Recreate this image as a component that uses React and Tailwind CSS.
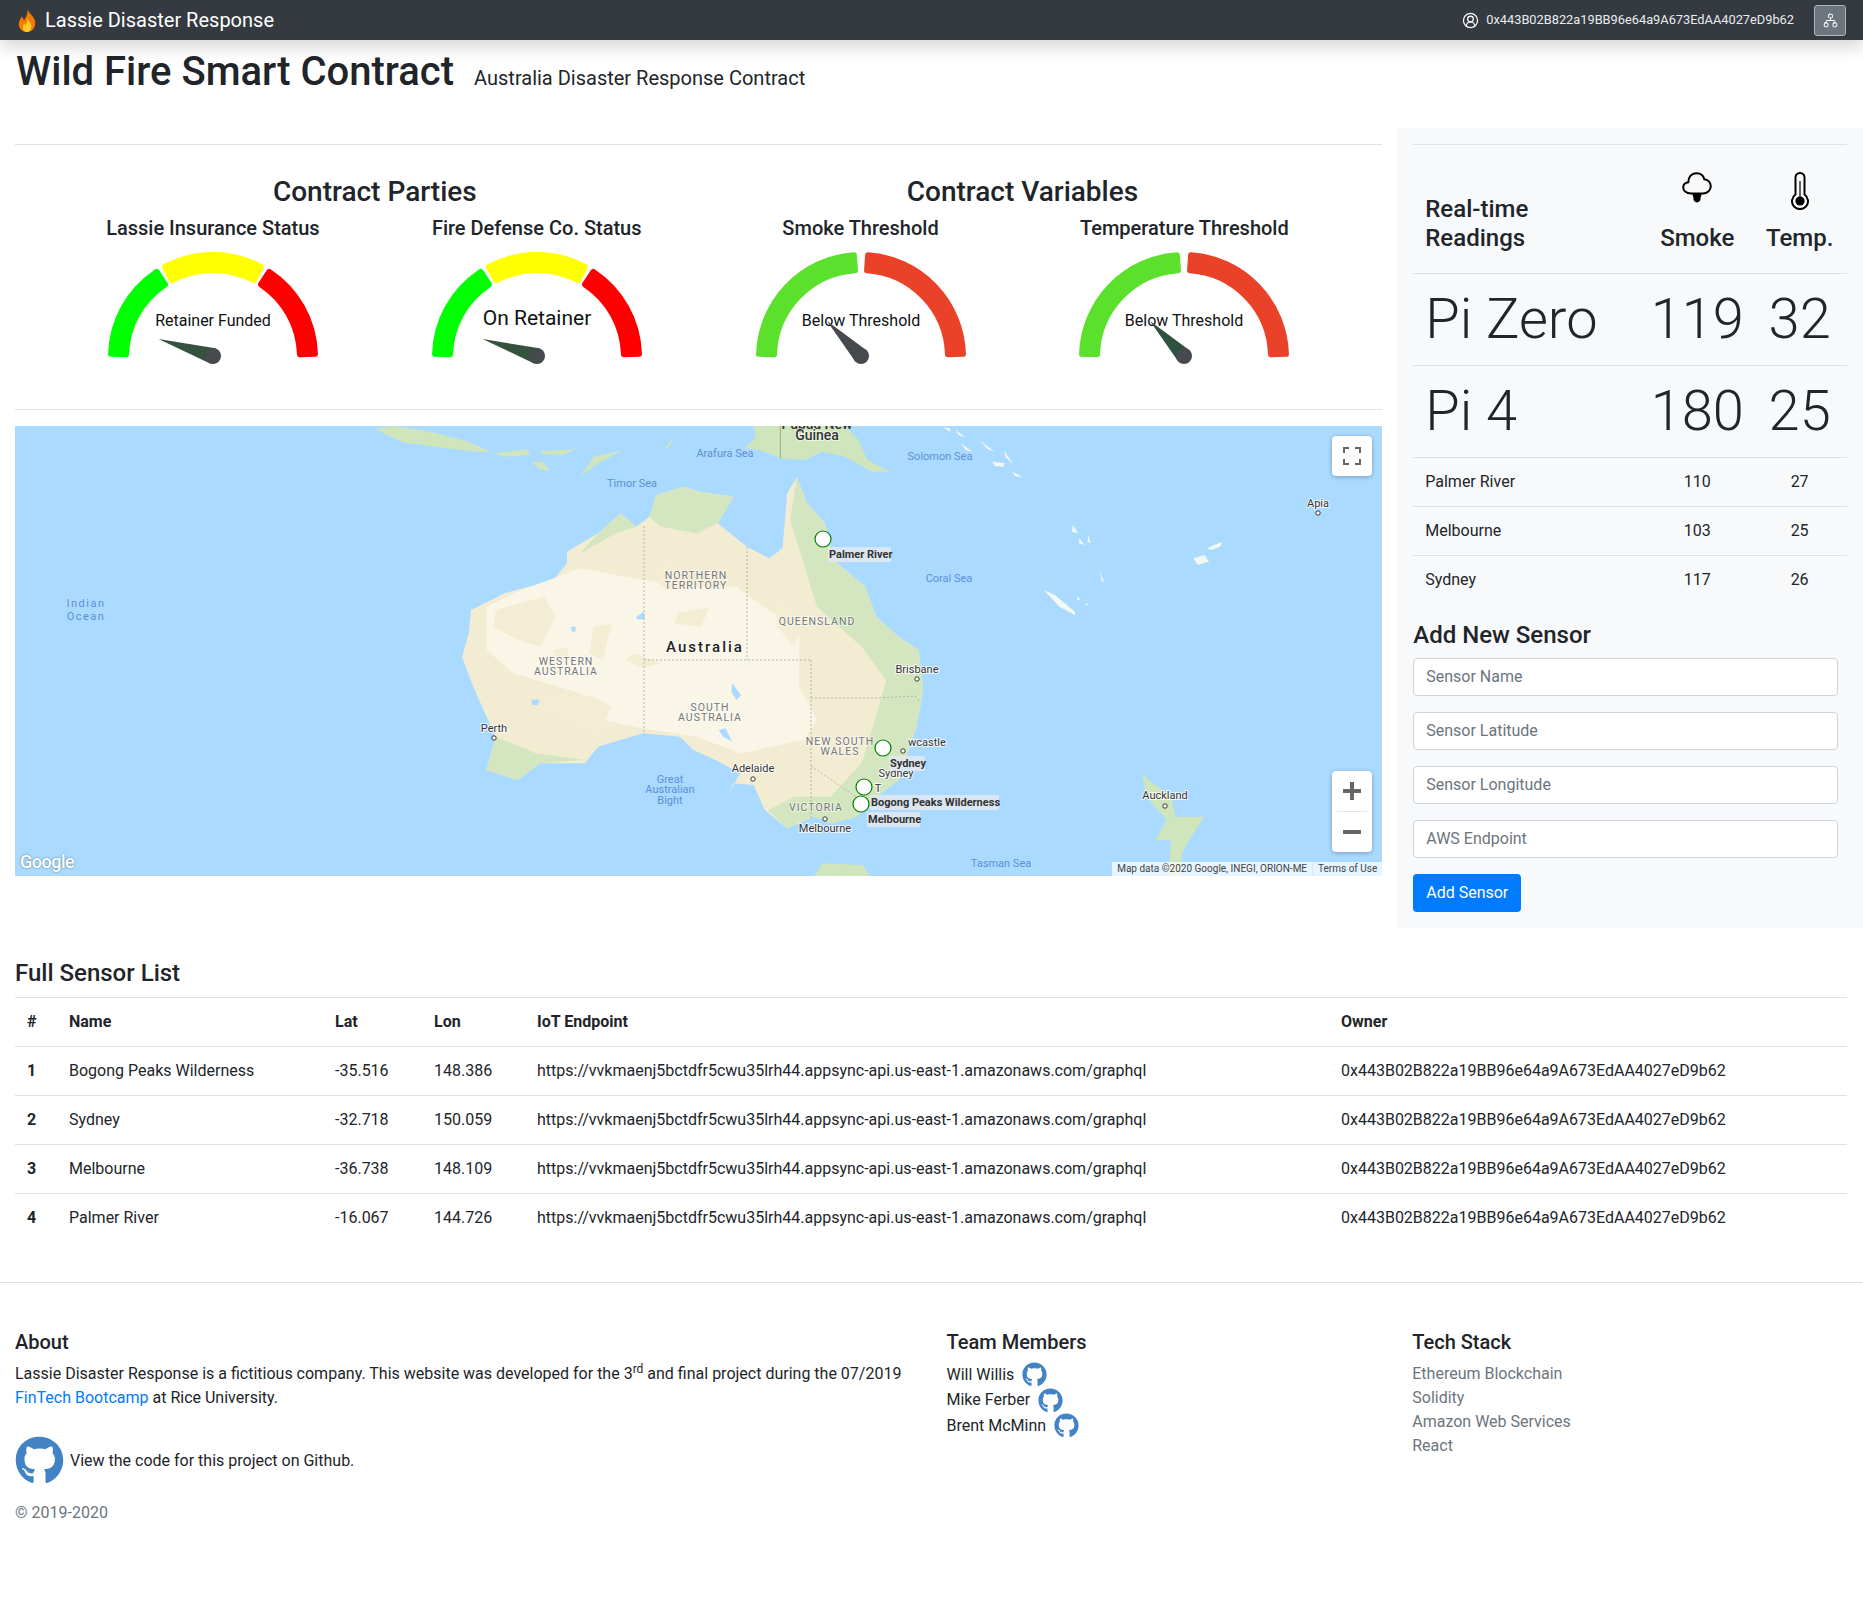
import React from "react";
import { FaGithub } from "react-icons/fa";
import { Network, UserCircle2 } from "lucide-react";

const address = "0x443B02B822a19BB96e64a9A673EdAA4027eD9b62";
const endpoint = "https://vvkmaenj5bctdfr5cwu35lrh44.appsync-api.us-east-1.amazonaws.com/graphql";

const sensors = [
  [1, "Bogong Peaks Wilderness", "-35.516", "148.386"],
  [2, "Sydney", "-32.718", "150.059"],
  [3, "Melbourne", "-36.738", "148.109"],
  [4, "Palmer River", "-16.067", "144.726"],
];

const readings = [
  ["Palmer River", 110, 27],
  ["Melbourne", 103, 25],
  ["Sydney", 117, 26],
];

// gauge drawing
const CX = 120;
const CY = 105;

function polar(r, deg) {
  const a = (Math.PI * (180 - deg)) / 180;
  return [CX + r * Math.cos(a), CY - r * Math.sin(a)];
}

function sector(a1, a2) {
  const ro = 102;
  const ri = 87;
  const [x1, y1] = polar(ro, a1);
  const [x2, y2] = polar(ro, a2);
  const [x3, y3] = polar(ri, a2);
  const [x4, y4] = polar(ri, a1);
  return `M${x1} ${y1}A${ro} ${ro} 0 0 1 ${x2} ${y2}L${x3} ${y3}A${ri} ${ri} 0 0 0 ${x4} ${y4}Z`;
}

function Gauge({ title, segments, label, labelSize = 16, labelY = -35, tip, needle }) {
  const hub = [CX, CY - 1];
  const t = [CX + tip[0], CY + tip[1]];
  const len = Math.hypot(t[0] - hub[0], t[1] - hub[1]);
  const nx = (-(t[1] - hub[1]) / len) * 8;
  const ny = ((t[0] - hub[0]) / len) * 8;
  return (
    <div className="flex flex-col items-center">
      <h5 className="text-[20px] leading-[24px] font-medium mb-3">{title}</h5>
      <svg width="240" height="118" viewBox="0 0 240 118" className="block">
        {segments.map(([a1, a2, color]) => (
          <path key={a1} d={sector(a1, a2)} fill={color} stroke={color} strokeWidth="6" strokeLinejoin="round" />
        ))}
        <text x={CX} y={CY + labelY} textAnchor="middle" dominantBaseline="middle" fontSize={labelSize} fill="#111">
          {label}
        </text>
        <polygon points={`${t[0]},${t[1]} ${hub[0] + nx},${hub[1] + ny} ${hub[0] - nx},${hub[1] - ny}`} fill={needle} />
        <circle cx={hub[0]} cy={hub[1]} r="8" fill="#464a4f" />
      </svg>
    </div>
  );
}

const threeZones = [
  [1.8, 56.5, "#00ff00"],
  [62, 118, "#ffff00"],
  [123.5, 178.2, "#ff0000"],
];
const twoZones = [
  [1.8, 86, "#5be12c"],
  [94, 178.2, "#ea4228"],
];

// map shapes, in the scaled coordinates of the reference crop
const australia =
  "1785,172 1808,250 1848,310 1868,420 1938,500 1963,590 2013,650 2058,690 2068,810 2053,920 2033,1000 2013,1080 1963,1130 1918,1190 1863,1210 1823,1190 1763,1225 1713,1170 1688,1095 1643,1090 1633,1120 1658,1060 1603,1020 1553,990 1523,950 1440,940 1340,980 1310,1030 1210,1030 1160,1080 1090,1050 1110,950 1060,800 1035,710 1050,640 1055,570 1130,520 1240,480 1270,430 1270,395 1340,340 1390,280 1425,320 1455,290 1470,225 1530,200 1568,215 1643,230 1608,310 1673,380 1723,415 1753,385 1763,220";
const desert =
  "1090,560 1150,520 1300,445 1440,480 1560,500 1650,500 1710,560 1790,620 1790,800 1830,900 1800,960 1660,1000 1560,950 1440,925 1350,900 1300,820 1150,760 1090,690";
const tan = [
  "1110,570 1220,530 1245,590 1210,680 1160,660 1105,620",
  "1330,620 1370,610 1350,720 1320,700",
  "1240,690 1270,680 1275,710 1245,710",
  "1420,700 1480,730 1440,745 1400,720",
  "1520,580 1590,560 1570,620 1510,610",
  "1230,820 1330,830 1370,860 1340,950 1280,900 1220,870",
  "1740,540 1800,600 1780,680 1740,620",
  "1500,420 1560,470 1500,510 1450,470",
];
const green = [
  "1785,172 1808,250 1848,310 1868,420 1938,500 1963,590 2013,650 2058,690 2068,810 2053,920 2033,1000 2013,1080 1963,1130 1918,1190 1863,1210 1823,1190 1763,1225 1720,1170 1780,1130 1860,1130 1930,1030 1960,900 1985,780 1930,680 1830,560 1800,430 1770,300",
  "1455,290 1470,225 1530,200 1568,215 1643,230 1608,310 1560,340 1480,320",
  "1110,950 1200,1000 1310,1020 1210,1030 1160,1080 1090,1050",
  "1340,340 1390,280 1425,320 1380,340 1300,400",
];
const lakes = [
  "1425,590 1442,575 1445,598 1428,598",
  "1280,620 1290,620 1288,636 1280,634",
  "1640,790 1660,825 1650,840 1638,815",
  "1190,840 1208,838 1205,855 1192,855",
  "1610,930 1625,925 1640,965 1620,950",
];
const northIslands = [
  "840,28 880,18 965,35 1050,65 1100,95 1065,95 1000,85 905,68",
  "1105,100 1180,88 1188,105 1130,110",
  "1210,93 1290,88 1260,105 1215,103",
  "1190,125 1215,125 1232,152 1210,150",
  "1300,170 1330,110 1392,92 1340,130",
  "1490,85 1510,50 1500,80",
];
// these use the right-hand crop, shifted by 1523
const png = "145,85 170,50 165,18 370,18 400,60 420,120 470,155 430,155 370,110 320,95 280,120 225,115 180,90";
const nz = "1035,1060 1050,1080 1100,1130 1110,1190 1175,1190 1140,1260 1125,1300 1120,1368 1095,1368 1100,1260 1065,1260 1090,1200 1045,1130";
const tasmania = "320,1330 410,1335 425,1368 300,1368";
const whiteIslands = [
  "590,22 605,25 605,35",
  "618,30 640,52 625,46",
  "670,60 705,95 690,88",
  "725,90 748,135 730,112",
  "700,125 728,130 725,140 705,138",
  "745,155 768,172 750,168",
  "630,70 655,95 640,90",
  "880,315 892,340 878,335",
  "895,355 906,375 893,370",
  "915,345 920,370 913,365",
  "1150,415 1175,405 1185,425 1160,435",
  "1180,385 1215,365 1210,380 1190,390",
  "815,510 840,525 885,575 885,585 850,560",
  "890,528 897,540 890,540",
  "910,550 916,556 908,556",
  "940,452 950,485 945,485",
];

// [text, x, y] relative to the map's top left corner
const seas = [
  ["Timor Sea", 617, 58],
  ["Arafura Sea", 710, 28],
  ["Solomon Sea", 925, 31],
  ["Coral Sea", 934, 153],
  ["Tasman Sea", 986, 438],
  ["Great", 655, 354],
  ["Australian", 655, 364],
  ["Bight", 655, 375],
];
const regions = [
  ["NORTHERN", 681, 150],
  ["TERRITORY", 681, 160],
  ["WESTERN", 551, 236],
  ["AUSTRALIA", 551, 246],
  ["SOUTH", 695, 282],
  ["AUSTRALIA", 695, 292],
  ["QUEENSLAND", 802, 196],
  ["NEW SOUTH", 825, 316],
  ["WALES", 825, 326],
  ["VICTORIA", 801, 382],
];
const cities = [
  ["Perth", 479, 303, 479, 312],
  ["Adelaide", 738, 343, 738, 353],
  ["Brisbane", 902, 244, 902, 253],
  ["Newcastle", 893, 317, 888, 325],
  ["Sydney", 881, 348],
  ["Melbourne", 810, 403, 810, 393],
  ["Auckland", 1150, 370, 1150, 380],
  ["Apia", 1303, 78, 1303, 87],
  ["T", 863, 363],
];
const pins = [
  [808, 113],
  [868, 322],
  [849, 361],
  [846, 378],
];
const pinLabels = [
  ["Palmer River", 813, 121, 63],
  ["Sydney", 874, 330, 36],
  ["Bogong Peaks Wilderness", 855, 369, 129],
  ["Melbourne", 852, 386, 53],
];

function AustraliaMap() {
  return (
    <div className="relative h-[450px] overflow-hidden bg-[#aadaff]">
      <svg viewBox="0 0 1367 450" width="1367" height="450" className="block" fontFamily="Roboto, sans-serif">
        <g transform="scale(0.44643 0.33333) translate(-33.6 -18)">
          <polygon points={australia} fill="#f2ecd3" />
          <polygon points={desert} fill="#f9f6e8" />
          {tan.map((p) => (
            <polygon key={p} points={p} fill="#f3edd3" />
          ))}
          {green.map((p) => (
            <polygon key={p} points={p} fill="#d3e6bf" />
          ))}
          {lakes.map((p) => (
            <polygon key={p} points={p} fill="#aadaff" />
          ))}
          {northIslands.map((p) => (
            <polygon key={p} points={p} fill="#cfe5bc" />
          ))}
          <g transform="translate(1523 0)">
            <polygon points={png} fill="#cfe5bc" />
            <line x1="225" y1="18" x2="225" y2="115" stroke="#8a9a8a" strokeWidth="2" />
            <polygon points={nz} fill="#cfe5bc" />
            <polygon points={tasmania} fill="#cfe5bc" />
            {whiteIslands.map((p) => (
              <polygon key={p} points={p} fill="#f4f8f2" />
            ))}
          </g>
        </g>

        {/* state borders */}
        <g stroke="#b5b5ac" strokeWidth="1" strokeDasharray="2 2" fill="none">
          <path d="M629 100V307" />
          <path d="M629 234H796" />
          <path d="M732 121V234" />
          <path d="M796 234V394" />
          <path d="M796 272H860L900 270L905 276" />
          <path d="M796 340L840 370L860 382" />
        </g>

        {seas.map(([t, x, y]) => (
          <text key={t + x} x={x} y={y} textAnchor="middle" dominantBaseline="middle" fontSize="11" fill="#5c8fd6">
            {t}
          </text>
        ))}
        <text x="71" y="178" textAnchor="middle" dominantBaseline="middle" fontSize="11" letterSpacing="1.5" fill="#5c8fd6">Indian</text>
        <text x="71" y="191" textAnchor="middle" dominantBaseline="middle" fontSize="11" letterSpacing="1.5" fill="#5c8fd6">Ocean</text>

        {regions.map(([t, x, y]) => (
          <text key={t + x} x={x} y={y} textAnchor="middle" dominantBaseline="middle" fontSize="10.5" letterSpacing="1" fill="#757575" stroke="#ffffff" strokeWidth="2" strokeOpacity="0.5" paintOrder="stroke">
            {t}
          </text>
        ))}
        <text x="690" y="222" textAnchor="middle" dominantBaseline="middle" fontSize="15" fontWeight="500" letterSpacing="2" fill="#222222" stroke="#ffffff" strokeWidth="2" strokeOpacity="0.6" paintOrder="stroke">
          Australia
        </text>
        <text x="802" y="-1" textAnchor="middle" dominantBaseline="middle" fontSize="14" fontWeight="500" fill="#333333">Papua New</text>
        <text x="802" y="10" textAnchor="middle" dominantBaseline="middle" fontSize="14" fontWeight="500" fill="#333333" stroke="#ffffff" strokeWidth="2" strokeOpacity="0.6" paintOrder="stroke">Guinea</text>

        {cities.map(([t, x, y, dx, dy]) => (
          <g key={t + x}>
            <text x={x} y={y} textAnchor={t === "Newcastle" ? "start" : "middle"} dominantBaseline="middle" fontSize="11" fill="#333333" stroke="#ffffff" strokeWidth="2" strokeOpacity="0.8" paintOrder="stroke">
              {t === "Newcastle" ? "wcastle" : t}
            </text>
            {dx && <circle cx={dx} cy={dy} r="2.2" fill="#ffffff" stroke="#333333" strokeWidth="1" />}
          </g>
        ))}

        {pinLabels.map(([t, x, y, w]) => (
          <g key={t}>
            <rect x={x} y={y} width={w} height="15" fill="#e3e8ee" fillOpacity="0.85" />
            <text x={x + 1} y={y + 8} dominantBaseline="middle" fontSize="11" fontWeight="700" fill="#333333">
              {t}
            </text>
          </g>
        ))}
        {pins.map(([x, y]) => (
          <circle key={y} cx={x} cy={y} r="8" fill="#ffffff" stroke="#008000" strokeWidth="1.2" />
        ))}
      </svg>

      <div className="absolute left-[5px] bottom-[2px] text-[18px] leading-[24px] font-medium tracking-[-0.5px] text-white [text-shadow:0_0_2px_rgba(0,0,0,0.5)]">
        Google
      </div>

      <div className="absolute right-[10px] top-[10px] w-10 h-10 bg-white rounded-sm shadow-[0_1px_4px_rgba(0,0,0,0.3)] flex items-center justify-center">
        <svg width="18" height="18" viewBox="0 0 18 18" fill="none" stroke="#666666" strokeWidth="2">
          <path d="M1 6V1H6M12 1H17V6M17 12V17H12M6 17H1V12" />
        </svg>
      </div>
      <div className="absolute right-[10px] bottom-[24px] w-10 h-[81px] bg-white rounded-sm shadow-[0_1px_4px_rgba(0,0,0,0.3)] flex flex-col items-center">
        <div className="h-10 flex items-center justify-center">
          <svg width="18" height="18" viewBox="0 0 18 18" fill="#666666">
            <path d="M7 0H11V7H18V11H11V18H7V11H0V7H7Z" />
          </svg>
        </div>
        <div className="w-[30px] h-px bg-[#e6e6e6]" />
        <div className="h-10 flex items-center justify-center">
          <svg width="18" height="18" viewBox="0 0 18 18" fill="#666666">
            <path d="M0 7H18V11H0Z" />
          </svg>
        </div>
      </div>
      <div className="absolute right-0 bottom-0 h-[14px] flex items-center bg-white/70 text-[10px] leading-[14px] text-[#444444] px-[5px] gap-[5px]">
        <span>Map data ©2020 Google, INEGI, ORION-ME</span>
        <span className="w-px h-full bg-[#e6e6e6]" />
        <span>Terms of Use</span>
      </div>
    </div>
  );
}

function CloudIcon() {
  return (
    <svg width="30" height="31" viewBox="0 0 30 31">
      <path
        d="M9 21.5C4.5 21.5 1.2 19 1.2 15.5C1.2 12.5 3.5 10.5 6.3 10.2C6 5.5 9.5 1.2 14.5 1.2C18.5 1.2 21.5 3.8 22.3 7.2C25.7 7.6 28.8 10.4 28.8 14C28.8 18.5 25 21.5 21 21.5Z"
        fill="none"
        stroke="#000"
        strokeWidth="2"
      />
      <path d="M10 21H20L18.5 26A3.6 3.6 0 1 1 11.5 26Z" fill="#000" />
    </svg>
  );
}

function ThermometerIcon() {
  return (
    <svg width="18" height="38" viewBox="0 0 18 38">
      <path
        d="M4.5 22.5V5.5A4.5 4.5 0 0 1 13.5 5.5V22.5A8 8 0 1 1 4.5 22.5Z"
        fill="none"
        stroke="#000"
        strokeWidth="2"
      />
      <rect x="8.4" y="9" width="1.2" height="20" fill="#000" />
      <circle cx="9" cy="29" r="4.6" fill="#000" />
    </svg>
  );
}

function Flame() {
  return (
    <svg width="18" height="23" viewBox="0 0 18 23" className="shrink-0">
      <path d="M9.5 0C10.5 4 15 6.5 16.8 11C18.6 16.5 15 23 9 23C3.5 23 0 18.5 1 13.5C1.5 11 3 9.5 3.5 7.5C5 9 5.5 10 6 11.5C8 8.5 10 5 9.5 0Z" fill="#f57c00" />
      <path d="M9.5 9C10 12 13.5 14 13.5 17.5C13.5 20.5 11.5 23 9 23C6.5 23 4.5 20.5 4.8 18C5 16.5 5.8 15.5 6.3 14.5C7 15.2 7.3 15.7 7.6 16.5C8.6 14.5 9.8 12 9.5 9Z" fill="#ffca28" />
    </svg>
  );
}

export default function App() {
  return (
    <div className="min-h-[1614px] bg-white font-[Roboto,sans-serif] text-[16px] leading-[24px] text-[#212529]">
      <nav className="relative z-10 h-10 bg-[#343a40] shadow-[0_8px_16px_rgba(0,0,0,0.15)] flex items-center justify-between pl-[18px] pr-[17px]">
        <div className="flex items-center gap-[9px] text-[20px] text-white">
          <Flame />
          <span>Lassie Disaster Response</span>
        </div>
        <div className="flex items-center">
          <UserCircle2 size={17} color="#f8f9fa" strokeWidth={1.8} />
          <span className="ml-[7px] text-[12.8px] text-[#e9ecef]">{address}</span>
          <button className="ml-5 w-8 h-[31px] rounded-[3px] border border-[#adb5bd] bg-[#6c757d] flex items-center justify-center">
            <Network size={15} color="#ffffff" strokeWidth={1.6} />
          </button>
        </div>
      </nav>

      <header className="h-[88px] pl-4 pt-2 flex items-baseline">
        <h1 className="text-[40px] leading-[48px] font-medium">Wild Fire Smart Contract</h1>
        <span className="ml-5 text-[20px] leading-[24px]">Australia Disaster Response Contract</span>
      </header>

      <div className="flex">
        <main className="w-3/4 px-[15px] pt-4">
          <hr className="border-t border-[#dee2e6]" />
          <div className="px-9 pt-[30px] grid grid-cols-2">
            <div>
              <h3 className="text-[28px] leading-[34px] font-medium text-center mb-[7px]">Contract Parties</h3>
              <div className="grid grid-cols-2">
                <Gauge title="Lassie Insurance Status" segments={threeZones} label="Retainer Funded" tip={[-54.5, -18]} needle="#35523f" />
                <Gauge title="Fire Defense Co. Status" segments={threeZones} label="On Retainer" labelSize={21} labelY={-38} tip={[-54.5, -18]} needle="#35523f" />
              </div>
            </div>
            <div>
              <h3 className="text-[28px] leading-[34px] font-medium text-center mb-[7px]">Contract Variables</h3>
              <div className="grid grid-cols-2">
                <Gauge title="Smoke Threshold" segments={twoZones} label="Below Threshold" tip={[-34, -36]} needle="#464a4f" />
                <Gauge title="Temperature Threshold" segments={twoZones} label="Below Threshold" tip={[-34, -36]} needle="#2f5240" />
              </div>
            </div>
          </div>
          <hr className="border-t border-[#dee2e6] mt-[39px] mb-4" />
          <AustraliaMap />
        </main>

        <aside className="w-1/4 bg-[#f8f9fa] px-4 pt-4 pb-4">
          <table className="w-full table-fixed border-collapse">
            <colgroup>
              <col className="w-[229px]" />
              <col className="w-[110px]" />
              <col />
            </colgroup>
            <thead>
              <tr className="border-t border-[#dee2e6] h-[129px]">
                <th className="align-bottom text-left px-3 pb-5 text-[24px] leading-[29px] font-medium">
                  Real-time
                  <br />
                  Readings
                </th>
                <th className="align-bottom pb-5 text-[24px] leading-[29px] font-medium">
                  <div className="flex flex-col items-center">
                    <div className="h-[52px]">
                      <CloudIcon />
                    </div>
                    Smoke
                  </div>
                </th>
                <th className="align-bottom pb-5 text-[24px] leading-[29px] font-medium">
                  <div className="flex flex-col items-center">
                    <div className="h-[52px]">
                      <ThermometerIcon />
                    </div>
                    Temp.
                  </div>
                </th>
              </tr>
            </thead>
            <tbody>
              {[["Pi Zero", 119, 32], ["Pi 4", 180, 25]].map(([name, smoke, temp]) => (
                <tr key={name} className="border-t border-[#dee2e6] h-[92px] text-[56px] leading-[67px] font-light">
                  <td className="px-3 whitespace-nowrap">{name}</td>
                  <td className="text-center">{smoke}</td>
                  <td className="text-center">{temp}</td>
                </tr>
              ))}
              {readings.map(([name, smoke, temp]) => (
                <tr key={name} className="border-t border-[#dee2e6] h-[49px]">
                  <td className="px-3">{name}</td>
                  <td className="text-center">{smoke}</td>
                  <td className="text-center">{temp}</td>
                </tr>
              ))}
            </tbody>
          </table>

          <h4 className="mt-4 mb-2 text-[24px] leading-[29px] font-medium">Add New Sensor</h4>
          <div className="flex flex-col gap-4 w-[425px]">
            {["Sensor Name", "Sensor Latitude", "Sensor Longitude", "AWS Endpoint"].map((p) => (
              <input
                key={p}
                placeholder={p}
                className="h-[38px] w-full px-3 bg-white border border-[#ced4da] rounded placeholder:text-[#6c757d]"
              />
            ))}
            <button className="h-[38px] w-[108px] rounded bg-[#007bff] text-white">Add Sensor</button>
          </div>
        </aside>
      </div>

      <section className="px-[15px] pt-[31px]">
        <h4 className="mb-[9px] text-[24px] leading-[29px] font-medium">Full Sensor List</h4>
        <table className="w-[1832px] table-fixed border-collapse text-left">
          <thead>
            <tr className="border-t border-[#dee2e6] h-[49px]">
              <th className="w-[42px] px-3 font-bold">#</th>
              <th className="w-[266px] px-3 font-bold">Name</th>
              <th className="w-[99px] px-3 font-bold">Lat</th>
              <th className="w-[103px] px-3 font-bold">Lon</th>
              <th className="w-[804px] px-3 font-bold">IoT Endpoint</th>
              <th className="px-3 font-bold">Owner</th>
            </tr>
          </thead>
          <tbody>
            {sensors.map(([id, name, lat, lon]) => (
              <tr key={id} className="border-t border-[#dee2e6] h-[49px]">
                <td className="px-3 font-bold">{id}</td>
                <td className="px-3">{name}</td>
                <td className="px-3">{lat}</td>
                <td className="px-3">{lon}</td>
                <td className="px-3 whitespace-nowrap">{endpoint}</td>
                <td className="px-3 whitespace-nowrap">{address}</td>
              </tr>
            ))}
          </tbody>
        </table>
      </section>

      <footer className="mt-[40px] border-t border-[#dee2e6] pt-[47px] grid grid-cols-4">
        <div className="col-span-2 px-[15px]">
          <h5 className="mb-[8px] text-[20px] leading-[24px] font-medium">About</h5>
          <p>
            Lassie Disaster Response is a fictitious company. This website was developed for the 3
            <sup className="text-[12px]">rd</sup> and final project during the 07/2019{" "}
            <a className="text-[#007bff]">FinTech Bootcamp</a> at Rice University.
          </p>
          <div className="mt-[26px] flex items-center gap-[6px]">
            <FaGithub size={49} color="#4183c4" />
            <span>View the code for this project on Github.</span>
          </div>
          <p className="mt-4 text-[#6c757d]">© 2019-2020</p>
        </div>
        <div className="px-[15px]">
          <h5 className="mb-[8px] text-[20px] leading-[24px] font-medium">Team Members</h5>
          {["Will Willis", "Mike Ferber", "Brent McMinn"].map((n) => (
            <div key={n} className="h-[25.5px] flex items-center gap-2">
              <span>{n}</span>
              <FaGithub size={25} color="#4183c4" />
            </div>
          ))}
        </div>
        <div className="px-[15px]">
          <h5 className="mb-[8px] text-[20px] leading-[24px] font-medium">Tech Stack</h5>
          <ul className="text-[#6c757d]">
            <li>Ethereum Blockchain</li>
            <li>Solidity</li>
            <li>Amazon Web Services</li>
            <li>React</li>
          </ul>
        </div>
      </footer>
    </div>
  );
}
